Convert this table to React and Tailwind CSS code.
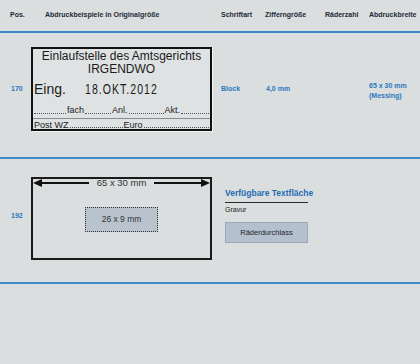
const sans = { fontFamily: '"Liberation Sans", Arial, sans-serif' };

// Dotted leader used on the stamp's fill-in lines
function Dots({ className = "" }) {
    return <div className={`border-b border-dotted border-[#555] mb-[2px] ${className}`} />;
}

function ArrowHead({ dir }) {
    return (
        <svg width="9" height="8" viewBox="0 0 9 8" className="shrink-0">
            {dir === "left"
                ? <polygon points="0,4 9,0 9,8" fill="#111" />
                : <polygon points="9,4 0,0 0,8" fill="#111" />}
        </svg>
    );
}

function Stamp() {
    return (
        <div className="w-[181px] h-[84px] border-2 border-[#111] bg-[#dfe2e3] shadow-[1px_1px_0_#f2f3f3] flex flex-col font-normal text-[#1a1a1a]" style={sans}>

            <div className="pt-[1px] text-center text-[12px] leading-[13px]">
                Einlaufstelle des Amtsgerichts
            </div>
            <div className="text-center text-[12px] leading-[13px]">
                IRGENDWO
            </div>

            <div className="mt-[4px] flex items-center h-[18px] pl-[1px]">
                <span className="text-[14px] leading-[18px] w-[51px]">Eing.</span>
                <span className="inline-block origin-left scale-x-[0.7] tracking-[1.5px] text-[15px] leading-[18px] whitespace-nowrap">
                    18.OKT.2012
                </span>
            </div>

            <div className="mt-[6px] flex items-end h-[12px] px-[1px] text-[9px] leading-[12px]">
                <Dots className="w-[32px]" />
                <span className="px-[1px]">fach</span>
                <Dots className="w-[26px]" />
                <span className="px-[1px]">Anl.</span>
                <Dots className="w-[35px]" />
                <span className="px-[1px]">Akt.</span>
                <Dots className="flex-1" />
            </div>

            <div className="mt-[2px] border-t border-[#8a8d90]" />

            <div className="flex items-end h-[10px] px-[1px] text-[9px] leading-[10px] mt-[1px]">
                <span className="pr-[1px]">Post WZ</span>
                <Dots className="w-[53px]" />
                <span className="px-[1px]">Euro</span>
                <Dots className="flex-1" />
            </div>

        </div>
    );
}

function TextArea() {
    return (
        <div className="w-[181px] h-[83px] border-2 border-[#1a1a1a] flex flex-col items-center font-normal text-[#333]" style={sans}>

            <div className="w-full h-[8px] flex items-center">
                <ArrowHead dir="left" />
                <div className="flex-1 h-[2px] bg-[#111]" />
                <span className="px-[8px] text-[9.5px] leading-[8px] whitespace-nowrap">65 x 30 mm</span>
                <div className="flex-1 h-[2px] bg-[#111]" />
                <ArrowHead dir="right" />
            </div>

            <div className="mt-[20px] w-[73px] h-[25px] bg-[#b9c3ce] border border-dotted border-[#333] flex items-center justify-center text-[8.5px]">
                26 x 9 mm
            </div>

        </div>
    );
}

export default function App() {

    const headers = [
        { label: "Pos.", w: "w-[45px] pl-[10px]" },
        { label: "Abdruckbeispiele in Originalgröße", w: "w-[176px]" },
        { label: "Schriftart", w: "w-[44px]" },
        { label: "Zifferngröße", w: "w-[60px]" },
        { label: "Räderzahl", w: "w-[44px]" },
        { label: "Abdruckbreite", w: "flex-1" },
    ];

    return (
        <div className="w-[420px] h-[364px] bg-[#dadedf] overflow-hidden" style={sans}>

            {/* column headings */}
            <div className="flex items-center h-[31px] text-[7px] font-bold text-[#1e2b38] whitespace-nowrap">
                {headers.map((h) => (
                    <div key={h.label} className={h.w}>{h.label}</div>
                ))}
            </div>
            <div className="h-[2px] bg-[#3f8bc8]" />

            {/* 170 */}
            <div className="h-[124px] pt-[14px]">
                <div className="flex items-center h-[84px] text-[7px] font-bold text-[#2a78bd]">
                    <div className="w-[31px] pl-[11px]">170</div>
                    <Stamp />
                    <div className="ml-[9px] w-[45px]">Block</div>
                    <div className="w-[103px]">4,0 mm</div>
                    <div className="leading-[10px] mt-[4px]">
                        65 x 30 mm<br />(Messing)
                    </div>
                </div>
            </div>
            <div className="h-[2px] bg-[#3f8bc8]" />

            {/* 192 */}
            <div className="h-[123px] pt-[18px]">
                <div className="flex items-center h-[83px]">
                    <div className="w-[31px] pl-[11px] text-[7px] font-bold text-[#2a78bd] mt-[-4px]">192</div>
                    <TextArea />
                    <div className="ml-[13px] w-[83px] mt-[-6px] flex flex-col">
                        <div className="text-[8.5px] font-bold text-[#1f6db2] leading-[10px] whitespace-nowrap">
                            Verfügbare Textfläche
                        </div>
                        <div className="mt-[4px] h-[1px] bg-[#2b2b2b]" />
                        <div className="mt-[2px] text-[7px] leading-[9px] text-[#222]">Gravur</div>
                        <div className="mt-[8px] h-[21px] bg-[#b4c0ce] border border-[#9aa8b8] flex items-center justify-center text-[7.5px] text-[#1f2328]">
                            Räderdurchlass
                        </div>
                    </div>
                </div>
            </div>
            <div className="h-[2px] bg-[#3f8bc8]" />

        </div>
    );
}
